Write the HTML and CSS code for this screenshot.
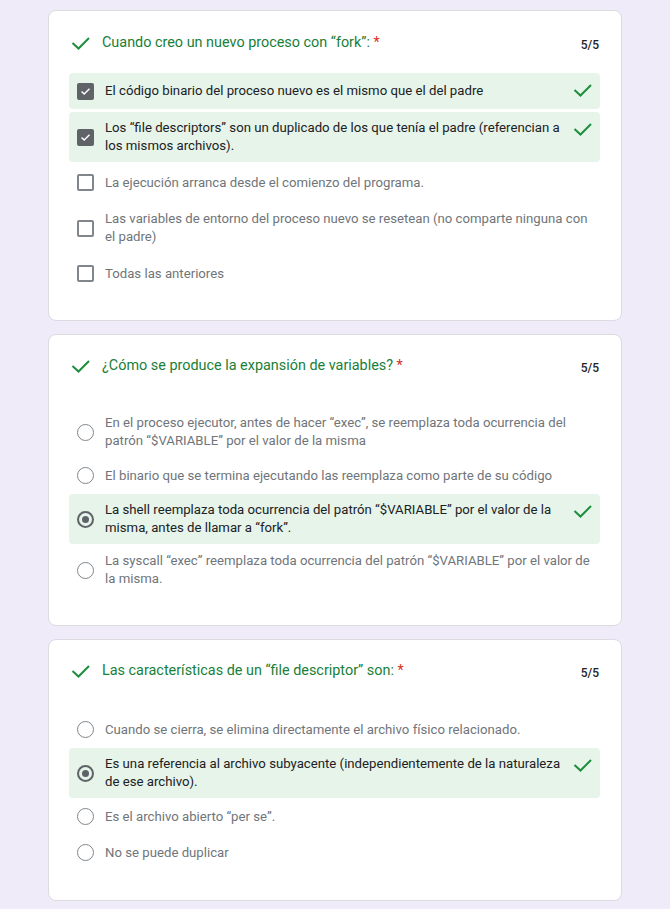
FILE: index.html
```html
<!DOCTYPE html>
<html lang="es">
<head>
<meta charset="utf-8">
<title>Formulario</title>
<link rel="stylesheet" href="styles.css">
</head>
<body>
<main class="page">
  <section class="card card-check">
    <div class="q-head">
      <svg class="ok-icon" viewBox="0 0 24 24"><polyline points="3.5,12 9.5,17.5 20,7"/></svg>
      <h2 class="q-title">Cuando creo un nuevo proceso con “fork”:<span class="req"> *</span></h2>
      <span class="score">5/5</span>
    </div>
    <ul class="opts opts-check">
      <li class="opt correct"><span class="box checked"><svg viewBox="0 0 18 18"><polyline points="3.5,9 7.2,12.6 14.5,5.3"/></svg></span><span class="opt-text">El código binario del proceso nuevo es el mismo que el del padre</span><svg class="ok-icon row-ok" viewBox="0 0 24 24"><polyline points="3.5,12 9.5,17.5 20,7"/></svg></li>
      <li class="opt correct"><span class="box checked"><svg viewBox="0 0 18 18"><polyline points="3.5,9 7.2,12.6 14.5,5.3"/></svg></span><span class="opt-text">Los “file descriptors” son un duplicado de los que tenía el padre (referencian a los mismos archivos).</span><svg class="ok-icon row-ok" viewBox="0 0 24 24"><polyline points="3.5,12 9.5,17.5 20,7"/></svg></li>
      <li class="opt"><span class="box"></span><span class="opt-text">La ejecución arranca desde el comienzo del programa.</span></li>
      <li class="opt"><span class="box"></span><span class="opt-text">Las variables de entorno del proceso nuevo se resetean (no comparte ninguna con el padre)</span></li>
      <li class="opt"><span class="box"></span><span class="opt-text">Todas las anteriores</span></li>
    </ul>
  </section>

  <section class="card card-radio">
    <div class="q-head">
      <svg class="ok-icon" viewBox="0 0 24 24"><polyline points="3.5,12 9.5,17.5 20,7"/></svg>
      <h2 class="q-title">¿Cómo se produce la expansión de variables?<span class="req"> *</span></h2>
      <span class="score">5/5</span>
    </div>
    <ul class="opts opts-radio">
      <li class="opt"><span class="radio"></span><span class="opt-text">En el proceso ejecutor, antes de hacer “exec”, se reemplaza toda ocurrencia del patrón “$VARIABLE” por el valor de la misma</span></li>
      <li class="opt"><span class="radio"></span><span class="opt-text">El binario que se termina ejecutando las reemplaza como parte de su código</span></li>
      <li class="opt correct"><span class="radio on"></span><span class="opt-text">La shell reemplaza toda ocurrencia del patrón “$VARIABLE” por el valor de la misma, antes de llamar a “fork”.</span><svg class="ok-icon row-ok" viewBox="0 0 24 24"><polyline points="3.5,12 9.5,17.5 20,7"/></svg></li>
      <li class="opt"><span class="radio"></span><span class="opt-text">La syscall “exec” reemplaza toda ocurrencia del patrón “$VARIABLE” por el valor de la misma.</span></li>
    </ul>
  </section>

  <section class="card card-radio">
    <div class="q-head">
      <svg class="ok-icon" viewBox="0 0 24 24"><polyline points="3.5,12 9.5,17.5 20,7"/></svg>
      <h2 class="q-title">Las características de un “file descriptor” son:<span class="req"> *</span></h2>
      <span class="score">5/5</span>
    </div>
    <ul class="opts opts-radio">
      <li class="opt"><span class="radio"></span><span class="opt-text">Cuando se cierra, se elimina directamente el archivo físico relacionado.</span></li>
      <li class="opt correct"><span class="radio on"></span><span class="opt-text">Es una referencia al archivo subyacente (independientemente de la naturaleza de ese archivo).</span><svg class="ok-icon row-ok" viewBox="0 0 24 24"><polyline points="3.5,12 9.5,17.5 20,7"/></svg></li>
      <li class="opt"><span class="radio"></span><span class="opt-text">Es el archivo abierto “per se”.</span></li>
      <li class="opt"><span class="radio"></span><span class="opt-text">No se puede duplicar</span></li>
    </ul>
  </section>
</main>
</body>
</html>
```
FILE: styles.css
```css
* { box-sizing: border-box; }

html, body {
  margin: 0;
  padding: 0;
  background: #f0ebf8;
  font-family: Roboto, "Liberation Sans", Arial, sans-serif;
  color: #202124;
}

.page {
  width: 574px;
  margin: 0 auto;
  padding-top: 10px;
  display: flex;
  flex-direction: column;
  gap: 13px;
}

.card {
  background: #fff;
  border: 1px solid #dadce0;
  border-radius: 8px;
  padding: 20px 21px 29px 20px;
}

.card-radio {
  padding-top: 19px;
  padding-bottom: 30px;
}

.q-head {
  display: flex;
  align-items: center;
  height: 24px;
}

.ok-icon {
  width: 24px;
  height: 24px;
  flex: none;
  fill: none;
  stroke: #1e8e3e;
  stroke-width: 2;
}

.q-title {
  margin: 0 0 0 9px;
  flex: 1;
  font-size: 14.4px;
  font-weight: 400;
  line-height: 20px;
  color: #188038;
}

.req { color: #d93025; }

.score {
  font-size: 12px;
  font-weight: 500;
  color: #202124;
  padding-top: 3px;
  padding-right: 1px;
}

.opts {
  list-style: none;
  margin: 18px 0 0;
  padding: 0;
  display: flex;
  flex-direction: column;
  gap: 3px;
}

.opts-radio {
  margin-top: 29px;
  gap: 1px;
}

.opt {
  display: flex;
  align-items: center;
  min-height: 35px;
  padding: 7px 5px 7px 8px;
  border-radius: 4px;
  font-size: 13.2px;
  line-height: 18px;
  color: #70757a;
}

.opt.correct {
  background: #e6f4ea;
  color: #202124;
}

.opt-text {
  flex: 1;
  margin-left: 11px;
}

.row-ok {
  align-self: flex-start;
  margin: -2px 0 0 6px;
}

.box {
  width: 17px;
  height: 17px;
  flex: none;
  border: 2px solid #80868b;
  border-radius: 2px;
  display: flex;
}

.box.checked {
  background: #5f6368;
  border-color: #5f6368;
}

.box svg {
  width: 13px;
  height: 13px;
  fill: none;
  stroke: #fff;
  stroke-width: 2;
}

.radio {
  width: 17px;
  height: 17px;
  flex: none;
  border: 1.5px solid #80868b;
  border-radius: 50%;
  display: flex;
  align-items: center;
  justify-content: center;
}

.radio.on { border: 2px solid #5f6368; }

.radio.on::after {
  content: "";
  width: 7px;
  height: 7px;
  border-radius: 50%;
  background: #5f6368;
}
```
